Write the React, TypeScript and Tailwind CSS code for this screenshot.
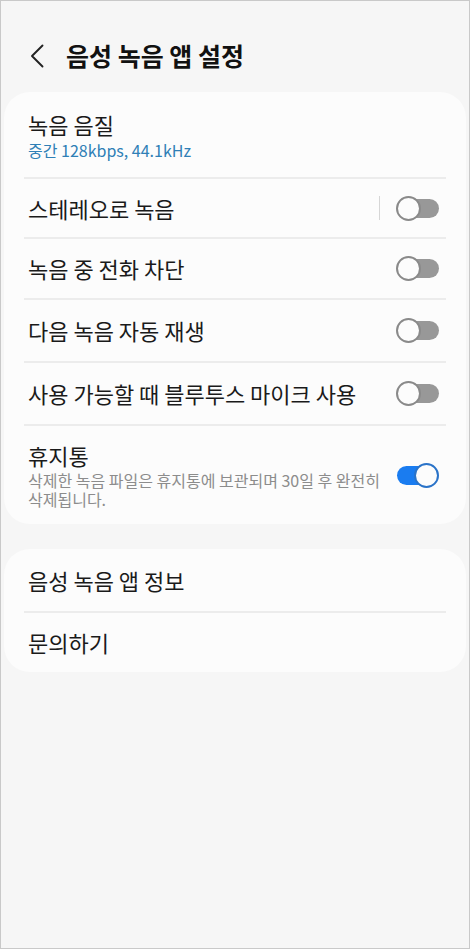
const FONT = { fontFamily: '"Noto Sans CJK KR", "Noto Sans", Roboto, sans-serif' }

function Toggle({ on }: { on?: boolean }) {
  if (on) {
    return (
      <div className="relative h-[25px] w-[43px] shrink-0">
        <div className="absolute left-[1px] top-[3px] h-[19px] w-[34px] rounded-full bg-[#1a7cf0]" />
        <div className="absolute right-0 top-0 h-[25px] w-[25px] rounded-full border-2 border-[#2a73c8] bg-[#fcfcfc]" />
      </div>
    )
  }
  return (
    <div className="relative h-[25px] w-[43px] shrink-0">
      <div className="absolute right-0 top-[3px] h-[19px] w-[34px] rounded-full bg-[#989898]" />
      <div className="absolute left-0 top-0 h-[25px] w-[25px] rounded-full border-2 border-[#8a8a8a] bg-[#fcfcfc]" />
    </div>
  )
}

function Divider() {
  return <div className="mx-[20px] h-[2px] bg-[#ececec]" />
}

function ToggleRow({ label, on, bar, h }: { label: string; on?: boolean; bar?: boolean; h: string }) {
  return (
    <div className={`flex items-center justify-between pl-[24px] pr-[27px] ${h}`}>
      <span className="text-[22px] text-[#1a1a1a]">{label}</span>
      <div className="flex items-center">
        {bar && <div className="mr-[16px] h-[24px] w-px bg-[#d6d6d6]" />}
        <Toggle on={on} />
      </div>
    </div>
  )
}

export default function App() {
  return (
    <div
      className="flex h-[949px] w-[470px] flex-col border border-[#c9c9c9] bg-[#f6f6f6]"
      style={FONT}
    >
      <div className="flex h-[91px] items-center pl-[29px] pt-[18px]">
        <svg width="14" height="24" viewBox="0 0 14 24" fill="none">
          <path d="M12.5 1.5 L2 12 L12.5 22.5" stroke="#222" strokeWidth="1.9" strokeLinecap="round" strokeLinejoin="round" />
        </svg>
        <h1 className="ml-[22px] text-[25px] font-bold text-[#111]">음성 녹음 앱 설정</h1>
      </div>

      <div className="mx-[3px] rounded-[26px] bg-[#fcfcfc]">
        <div className="flex h-[85px] flex-col justify-center pl-[24px] pt-[2px]">
          <span className="text-[22px] leading-[29px] text-[#1a1a1a]">녹음 음질</span>
          <span className="text-[16px] leading-[22px] text-[#2f7fb6]">중간 128kbps, 44.1kHz</span>
        </div>
        <Divider />
        <ToggleRow label="스테레오로 녹음" bar h="h-[58px]" />
        <Divider />
        <ToggleRow label="녹음 중 전화 차단" h="h-[59px]" />
        <Divider />
        <ToggleRow label="다음 녹음 자동 재생" h="h-[61px]" />
        <Divider />
        <ToggleRow label="사용 가능할 때 블루투스 마이크 사용" h="h-[61px]" />
        <Divider />
        <div className="flex h-[98px] items-center justify-between pl-[24px] pr-[27px]">
          <div className="flex flex-col">
            <span className="text-[22px] leading-[28px] text-[#1a1a1a]">휴지통</span>
            <span className="mt-[2px] w-[364px] text-[16px] leading-[19px] text-[#8c8c8c]">
              삭제한 녹음 파일은 휴지통에 보관되며 30일 후 완전히 삭제됩니다.
            </span>
          </div>
          <Toggle on />
        </div>
      </div>

      <div className="mx-[3px] mt-[25px] rounded-[26px] bg-[#fcfcfc]">
        <div className="flex h-[62px] items-center pl-[24px]">
          <span className="text-[22px] text-[#1a1a1a]">음성 녹음 앱 정보</span>
        </div>
        <Divider />
        <div className="flex h-[59px] items-center pl-[24px]">
          <span className="text-[22px] text-[#1a1a1a]">문의하기</span>
        </div>
      </div>
    </div>
  )
}
